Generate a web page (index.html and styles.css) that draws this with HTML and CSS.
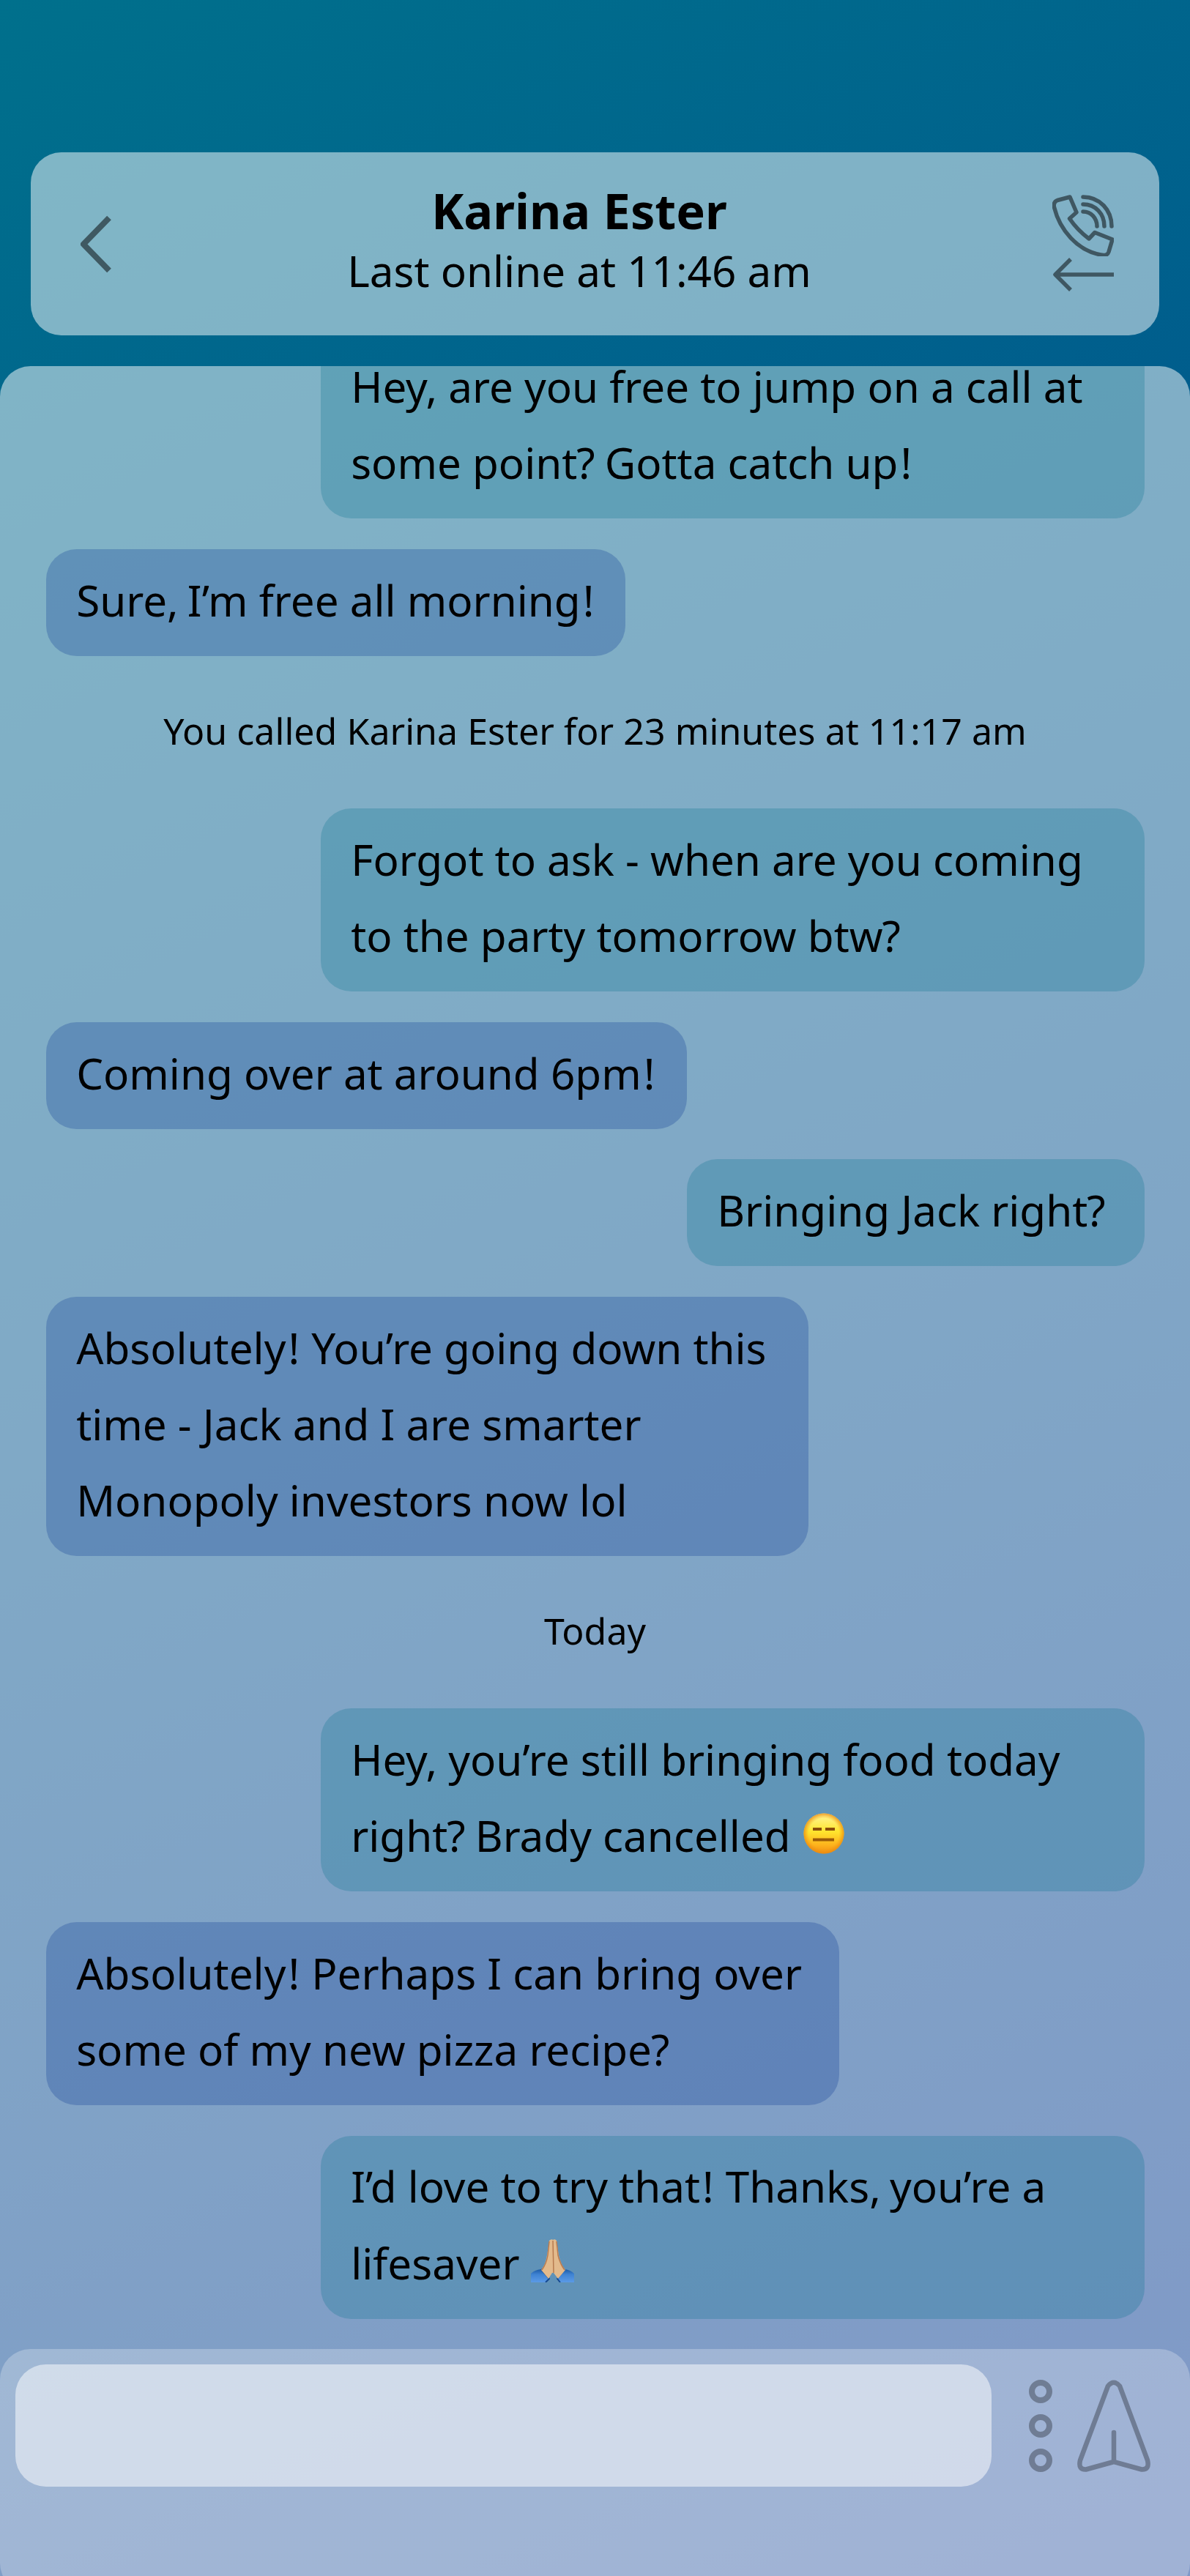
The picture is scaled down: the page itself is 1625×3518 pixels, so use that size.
FILE: index.html
```html
<!DOCTYPE html>
<html lang="en">
<head>
<meta charset="utf-8">
<title>Karina Ester</title>
<link rel="stylesheet" href="styles.css">
</head>
<body>
<div class="screen">
  <header class="header">
    <svg class="back" viewBox="0 0 45 79"><path d="M40 3.500 5 39.500 40 75.500"/></svg>
    <div class="contact">
      <h1 class="name">Karina Ester</h1>
      <p class="status">Last online at 11:46 am</p>
    </div>
    <div class="calls">
      <svg class="phone" viewBox="0 0 84 84"><path d="M24 3 7 7.500Q1 10 2.500 17C10 48 34 76 66 82Q75 84 77 78L82 61 58 51.500 50 60Q34 48 23.500 32.500L33 24ZM42 3C65 3 81 21 81 43M42 13C59 13 71 26 71 43M42 23C53 23 61 32 61 43"/></svg>
      <svg class="arrow" viewBox="0 0 84 46"><path d="M84 23H4M25 2 4 23 25 44"/></svg>
    </div>
  </header>
  <main class="chat">
    <div class="messages">
      <p class="msg sent wide">Hey, are you free to jump on a call at<br>some point<span class="q">?</span> Gotta catch up<span class="ex">!</span></p>
      <p class="msg received w190">Sure<span class="comma">,</span> I’m free all morning<span class="ex">!</span></p>
      <p class="note">You called Karina Ester for 23 minutes at 11:17 am</p>
      <p class="msg sent wide">Forgot to ask - when are you coming<br>to the party tomorrow btw<span class="q">?</span></p>
      <p class="msg received w210">Coming over at around 6pm<span class="ex">!</span></p>
      <p class="msg sent w150">Bringing Jack right<span class="q">?</span></p>
      <p class="msg received w250">Absolutely<span class="ex">!</span> You’re going down this<br>time - Jack and I are smarter<br>Monopoly investors now lol</p>
      <p class="note">Today</p>
      <p class="msg sent wide">Hey, you’re still bringing food today<br>right<span class="q">?</span> Brady cancelled <svg class="emoji face" viewBox="0 0 56 56" role="img" aria-label="expressionless face">
        <defs>
          <linearGradient id="skin" x1="0" y1="0" x2="0" y2="1"><stop offset="0" stop-color="#fff59a"/><stop offset=".45" stop-color="#ffe52e"/><stop offset=".8" stop-color="#fdb01c"/><stop offset="1" stop-color="#f18e12"/></linearGradient>
          <radialGradient id="rim"><stop offset=".75" stop-color="#f39a14" stop-opacity="0"/><stop offset="1" stop-color="#e98a10" stop-opacity=".8"/></radialGradient>
        </defs>
        <circle cx="28" cy="28" r="27.500" fill="url(#skin)"/><circle cx="28" cy="28" r="27.500" fill="url(#rim)"/>
        <path d="M13 22H25M30 22H43" stroke="#8c4d0a"/><path d="M13 36.500H42" stroke="#9b5a08"/>
      </svg></p>
      <p class="msg received w260">Absolutely<span class="ex">!</span> Perhaps I can bring over<br>some of my new pizza recipe<span class="q">?</span></p>
      <p class="msg sent wide">I’d love to try that<span class="ex">!</span> Thanks<span class="comma">,</span> you’re a<br>lifesaver <svg class="emoji hands" viewBox="0 0 59 59" role="img" aria-label="folded hands">
        <defs><linearGradient id="sleeve" x1="0" y1="0" x2="0" y2="1"><stop offset="0" stop-color="#1c5aa6"/><stop offset=".4" stop-color="#3f83d3"/><stop offset="1" stop-color="#5b9ae6"/></linearGradient></defs>
        <path d="M0 47Q5 42 14 41L24 53 20 59H0ZM59 47Q54 42 46 41L36 53 40 59H59Z" fill="url(#sleeve)"/>
        <path d="M14 41 25 54 20 59M46 41 36 54 40 59" stroke="#164a91" stroke-width="2"/>
        <path d="M25 2Q28-1 30 1 33-1 35 2L38 22Q41 35 47 42L37 54 31 46H29L24 54 14 42Q20 35 22 22Z" fill="#e3ba8c"/>
        <path d="M30 2 31 46M25 3 23 22Q21 34 15 42M35 3 37 22Q40 34 46 42" stroke="#b77b50" stroke-width="1.500"/>
      </svg></p>
    </div>
    <footer class="composer">
      <div class="input"></div>
      <svg class="more" viewBox="0 0 32 126"><circle cx="16" cy="16" r="12"/><circle cx="16" cy="63" r="12"/><circle cx="16" cy="110" r="12"/></svg>
      <svg class="send" viewBox="0 0 100 126"><path d="M42 8.500Q50-1 58 8.500L96 110Q99 123 88 122.500L50 112 12 122.500Q1 123 4 110ZM50 112V72"/></svg>
    </footer>
  </main>
</div>
</body>
</html>
```
FILE: styles.css
```css
:root { --u: 4.16667px; }
* { box-sizing: border-box; margin: 0; padding: 0; }
body { font-family: "Noto Sans", sans-serif; color: #000; }
.screen {
  height: 3518px;
  overflow: hidden;
  display: flex;
  flex-direction: column;
  gap: calc(10 * var(--u));
  padding-top: calc(50 * var(--u));
  background: linear-gradient(155.2deg, #00708c, #00318e);
}
.header {
  flex: none;
  height: calc(60 * var(--u));
  margin: 0 calc(10 * var(--u));
  padding: 0 62px 0 67px;
  display: flex;
  align-items: center;
  justify-content: space-between;
  border-radius: calc(10 * var(--u));
  background: rgba(255, 255, 255, .5);
}
svg { fill: none; stroke: #000; stroke-linejoin: round; }
.back { width: 45px; height: 79px; stroke-width: 8; opacity: .5; }
.contact { text-align: center; padding: 0 9px 10px 0; }
.name { font-size: calc(16 * var(--u)); line-height: 83px; font-weight: 700; }
.status { font-size: calc(14 * var(--u)); line-height: 82px; }
.calls { width: 84px; display: flex; flex-direction: column; gap: 2px; padding-bottom: 2px; opacity: .5; }
.phone { height: 84px; stroke-width: 5.500; stroke-linecap: round; }
.arrow { height: 46px; stroke-width: 5.500; }
.chat {
  flex: none;
  height: calc(730 * var(--u));
  display: flex;
  flex-direction: column;
  overflow: hidden;
  border-radius: calc(10 * var(--u)) calc(10 * var(--u)) 0 0;
  background: rgba(255, 255, 255, .5);
}
.messages {
  height: calc(650 * var(--u));
  overflow: hidden;
  padding: 0 calc(15 * var(--u)) calc(10 * var(--u));
  display: flex;
  flex-direction: column;
  justify-content: flex-end;
  align-items: flex-start;
  gap: calc(10 * var(--u));
}
.msg {
  flex: none;
  padding: calc(5 * var(--u) - 3px) calc(10 * var(--u)) calc(5 * var(--u) + 3px);
  border-radius: calc(10 * var(--u));
  font-size: calc(14 * var(--u));
  line-height: calc(25 * var(--u));
  white-space: nowrap;
}
.sent { align-self: flex-end; background: rgba(0, 112, 140, .25); }
.received { background: rgba(0, 49, 142, .25); }
.wide { width: calc(270 * var(--u)); }
.w150 { width: calc(150 * var(--u)); }
.w190 { width: calc(190 * var(--u)); }
.w210 { width: calc(210 * var(--u)); }
.w250 { width: calc(250 * var(--u)); }
.w260 { width: calc(260 * var(--u)); }
/* optical spacing of punctuation */
.ex { margin-left: 3px; margin-right: 1px; }
.q { margin-left: -1px; margin-right: -2px; }
.comma { margin-right: -3px; }
.emoji { display: inline-block; stroke: none; }
.face { width: 56px; height: 56px; margin-left: 2px; vertical-align: -3px; stroke-width: 4; }
.hands { width: 59px; height: 59px; margin-left: 0; vertical-align: -4px; }
.note {
  flex: none;
  align-self: center;
  padding-bottom: 4px;
  font-size: calc(12 * var(--u));
  letter-spacing: .04px;
  line-height: calc(30 * var(--u) - 4px);
}
.composer {
  flex: none;
  height: calc(80 * var(--u));
  display: flex;
  align-items: flex-start;
  padding: calc(5 * var(--u));
  border-radius: calc(10 * var(--u));
  background: rgba(255, 255, 255, .25);
}
.input {
  width: calc(320 * var(--u));
  height: calc(40 * var(--u));
  border-radius: calc(10 * var(--u));
  background: rgba(255, 255, 255, .5);
}
.more { width: 32px; height: 126px; margin: 21px 0 0 51px; stroke-width: 8; opacity: .3; }
.send { width: 100px; height: 126px; margin: 21px 0 0 34px; stroke-width: 6.500; stroke-linecap: round; opacity: .3; }
```
